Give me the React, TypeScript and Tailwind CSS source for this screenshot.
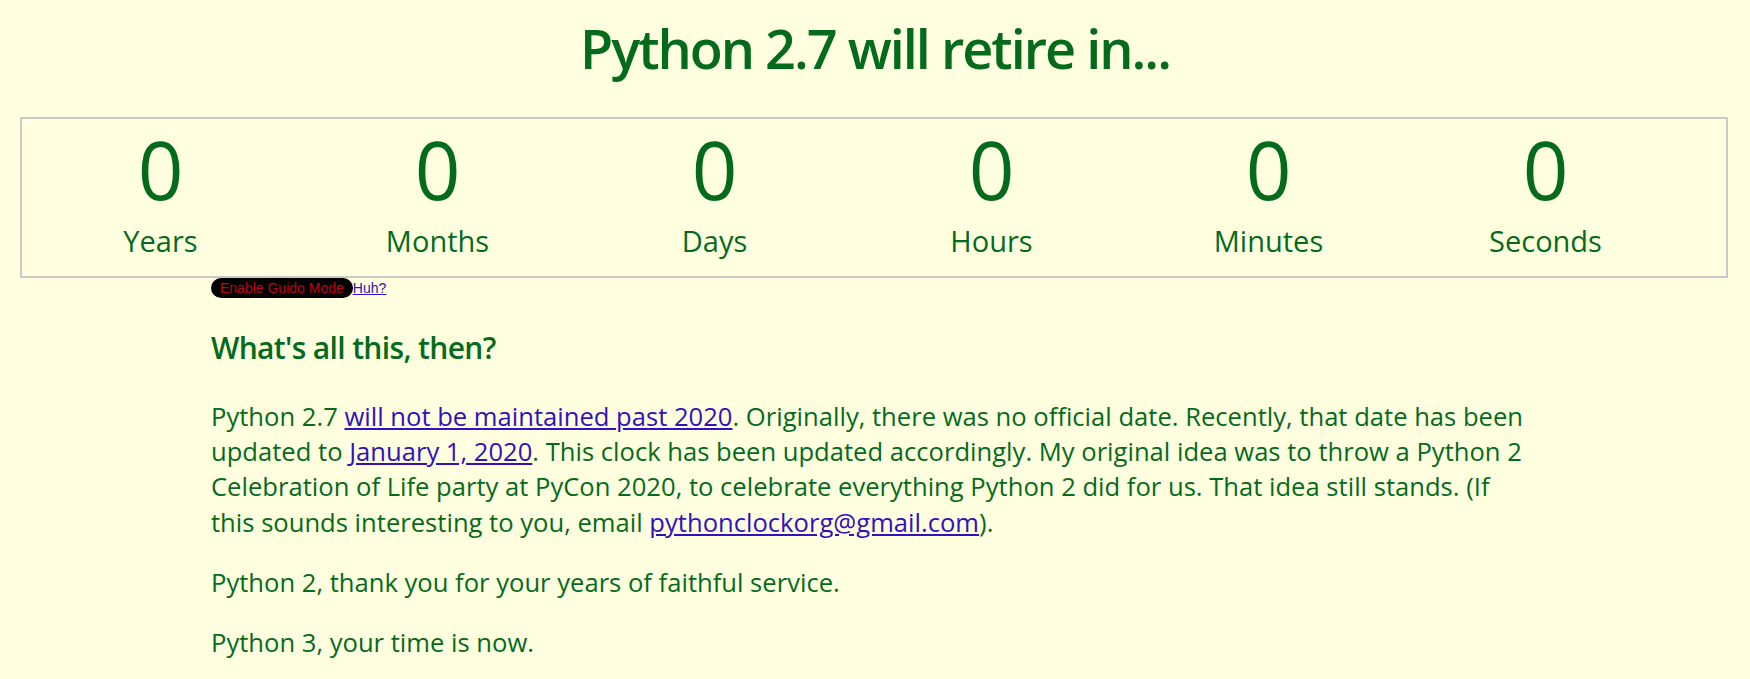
import React from 'react';

const units = ['Years', 'Months', 'Days', 'Hours', 'Minutes', 'Seconds'];

export default function App() {
    return (
        <div className="min-h-[679px] bg-[#ffffdf] text-[#056b1c] font-['Open_Sans',sans-serif]">
            {/* Title */}
            <h1 className="pt-[21px] text-center text-[54px] leading-[54px] font-semibold tracking-[-2px]">
                Python 2.7 will retire in...
            </h1>

            {/* Countdown */}
            <div className="ml-[20px] mr-[22px] mt-[42px] border-2 border-[#c9c9c9]">
                <div className="flex pt-[10px] pb-[21px]">
                    {units.map((u) => (
                        <div key={u} className="w-[277px] text-center">
                            <div className="text-[80px] leading-[80px]">0</div>
                            <div className="mt-[18px] text-[29px] leading-[28px]">{u}</div>
                        </div>
                    ))}
                </div>
            </div>

            <div className="mx-auto w-[1328px]">
                <div className="flex items-center font-['Liberation_Sans',Arial,sans-serif] text-[14px]">
                    <button className="h-[20px] rounded-[10px] bg-black px-[9px] text-[#c0001c] leading-[20px]">
                        Enable Guido Mode
                    </button>
                    <a href="#" className="text-[#3311bb] underline leading-[20px]">Huh?</a>
                </div>

                {/* About */}
                <h2 className="mt-[30px] text-[30px] leading-[40px] font-semibold tracking-[-0.65px]">
                    What's all this, then?
                </h2>

                <div className="mt-[31px] text-[25.6px] leading-[35.2px] space-y-[25px]">
                    <p>
                        Python 2.7{' '}
                        <a href="#" className="text-[#3311bb] underline">will not be maintained past 2020</a>.
                        Originally, there was no official date. Recently, that date has been updated to{' '}
                        <a href="#" className="text-[#3311bb] underline">January 1, 2020</a>. This clock has been
                        updated accordingly. My original idea was to throw a Python 2 Celebration of Life party at
                        PyCon 2020, to celebrate everything Python 2 did for us. That idea still stands. (If this
                        sounds interesting to you, email{' '}
                        <a href="#" className="text-[#3311bb] underline">pythonclockorg@gmail.com</a>).
                    </p>
                    <p>Python 2, thank you for your years of faithful service.</p>
                    <p>Python 3, your time is now.</p>
                </div>
            </div>
        </div>
    );
}
